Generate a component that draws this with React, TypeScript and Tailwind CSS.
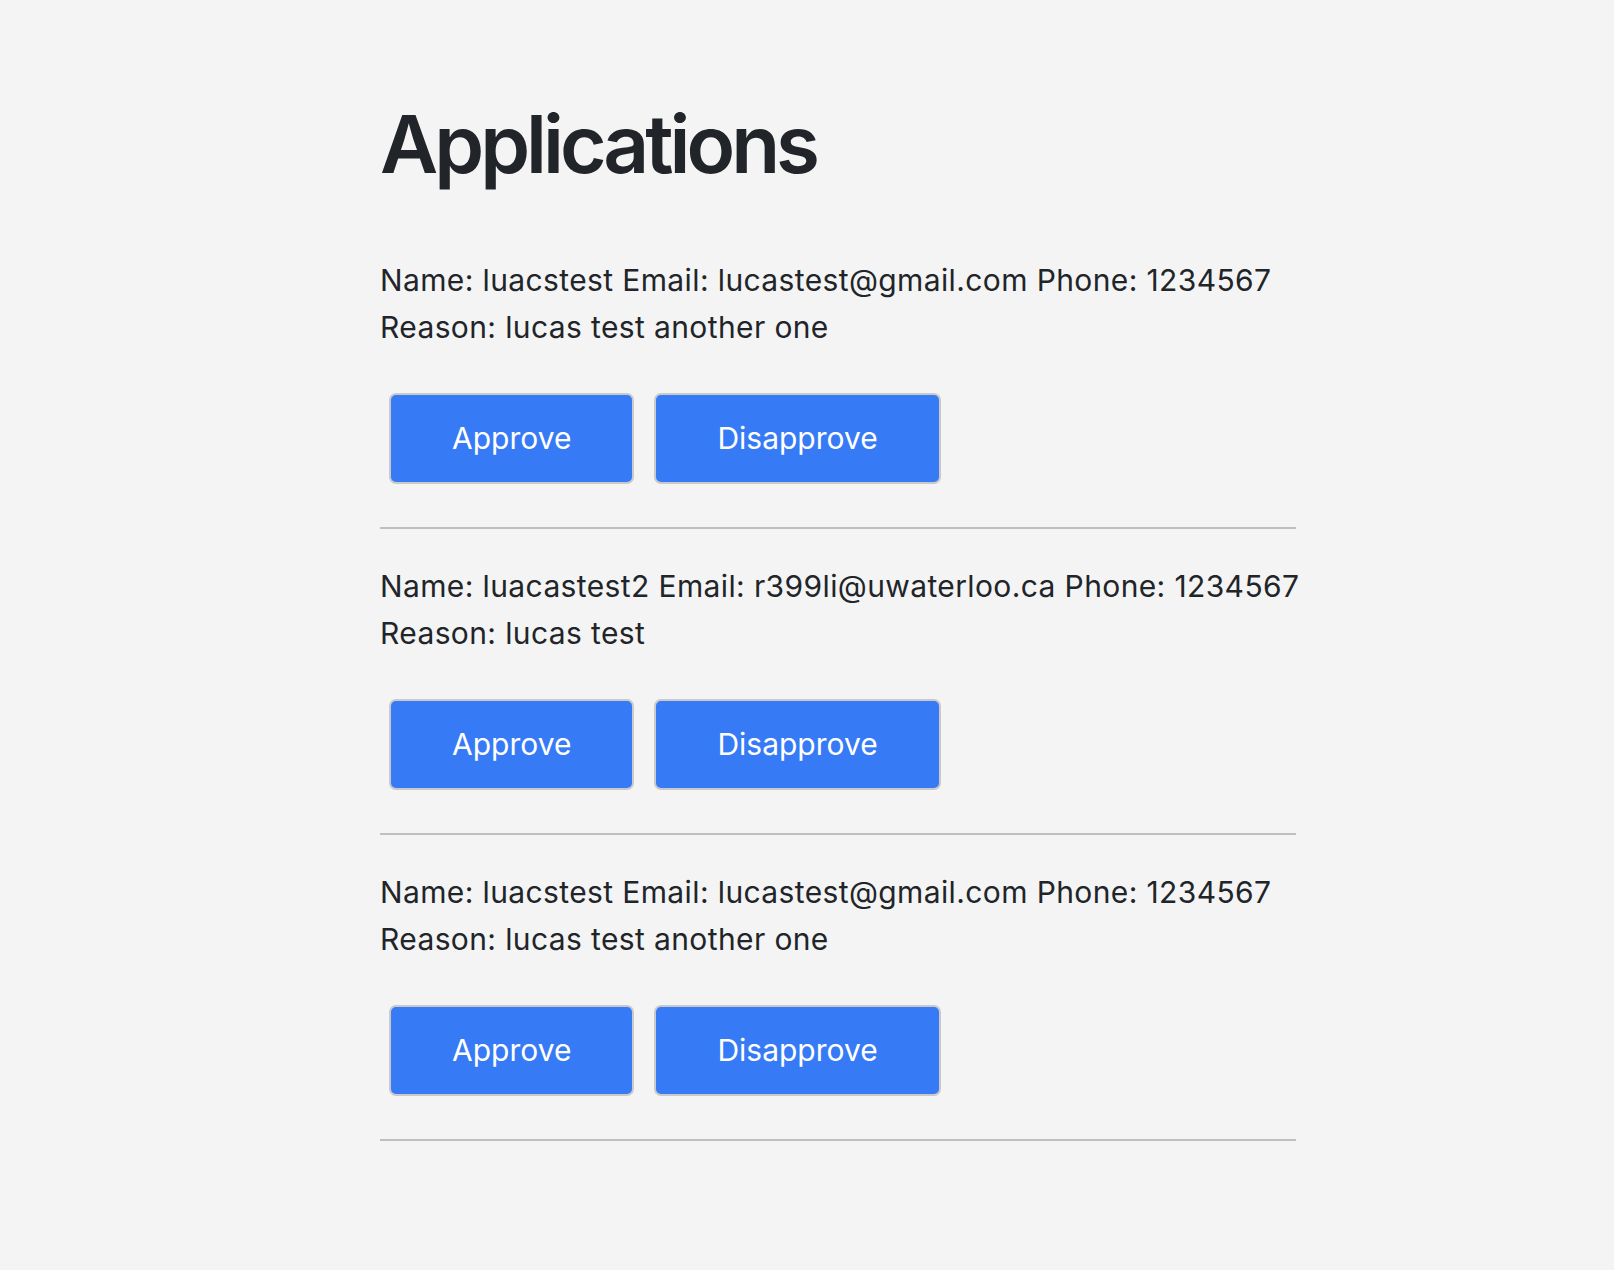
const applications = [
  { name: 'luacstest', email: 'lucastest@gmail.com', phone: '1234567', reason: 'lucas test another one' },
  { name: 'luacastest2', email: 'r399li@uwaterloo.ca', phone: '1234567', reason: 'lucas test' },
  { name: 'luacstest', email: 'lucastest@gmail.com', phone: '1234567', reason: 'lucas test another one' },
];

function ApplicationItem({ app }: { app: (typeof applications)[number] }) {
  return (
    <div>
      <div className="pt-[34px] text-[30px] leading-[47px] tracking-[0.38px] whitespace-nowrap">
        <p>
          Name: {app.name} Email: {app.email} Phone: {app.phone}
        </p>
        <p>Reason: {app.reason}</p>
      </div>
      <div className="mt-[42px] mb-[43px] pl-[9px] flex gap-[20px]">
        <button className="h-[91px] px-[61px] rounded-[7px] border-2 border-[#cacaca] bg-[#377af6] text-white text-[30px]">
          Approve
        </button>
        <button className="h-[91px] px-[61px] rounded-[7px] border-2 border-[#cacaca] bg-[#377af6] text-white text-[30px]">
          Disapprove
        </button>
      </div>
      <hr className="border-t-2 border-[#bfbfbf]" />
    </div>
  );
}

export default function App() {
  return (
    <div className="min-h-screen bg-[#f4f4f4] text-[#212529] font-['Inter',sans-serif]">
      <div className="ml-[380px] w-[916px] pt-[104px]">
        <h1 className="text-[80px] leading-none font-semibold tracking-[-0.05em] mb-[39px]">Applications</h1>
        {applications.map((app, i) => (
          <ApplicationItem key={i} app={app} />
        ))}
      </div>
    </div>
  );
}
